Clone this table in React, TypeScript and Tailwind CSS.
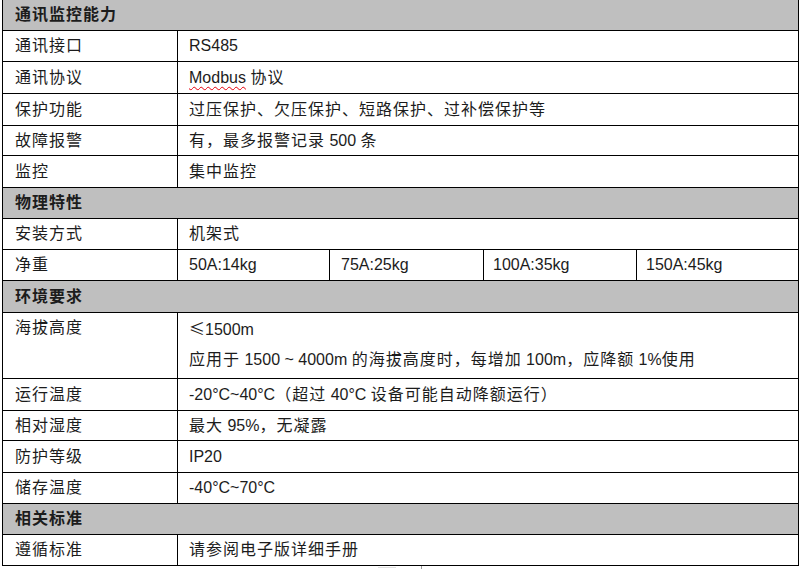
import React from "react";

const CJK_RE = /([\u3000-\u303f\u4e00-\u9fff\uff00-\uffef]+)/;

function T({ s }: { s: string }) {
  const parts = s.split(CJK_RE).filter((p) => p.length > 0);
  return (
    <span className="whitespace-pre">
      {parts.map((p, i) =>
        CJK_RE.test(p) ? (
          <span key={i} className="tracking-[1px]">
            {p}
          </span>
        ) : (
          <span key={i}>{p}</span>
        )
      )}
    </span>
  );
}

type H = "h31" | "h30" | "h32" | "h66";
const hc: Record<H, string> = {
  h30: "h-[30px]",
  h31: "h-[31px]",
  h32: "h-[32px]",
  h66: "h-[66px]",
};

function Header({ label, h }: { label: string; h: H }) {
  return (
    <div className={`${hc[h]} flex items-center border-b border-black bg-[#bfbfbf] pl-[12px] font-bold`}>
      <T s={label} />
    </div>
  );
}

function Row({ label, h, children }: { label: string; h: H; children: React.ReactNode }) {
  return (
    <div className={`${hc[h]} flex border-b border-black`}>
      <div className="flex w-[175px] shrink-0 items-center border-r border-black pl-[12px]">
        <T s={label} />
      </div>
      <div className="flex flex-1 items-center pl-[11px]">
        <span className="whitespace-pre">{children}</span>
      </div>
    </div>
  );
}

export default function App() {
  return (
    <div
      className="min-h-[569px] w-[800px] bg-white text-[16px] text-[#1c1c1c]"
      style={{ fontFamily: '"Liberation Sans", "Noto Sans CJK SC", sans-serif' }}
    >
      <div className="ml-[2px] flex w-[797px] flex-col border-x border-black">
        <Header label="通讯监控能力" h="h31" />
        <Row label="通讯接口" h="h31">
          RS485
        </Row>
        <Row label="通讯协议" h="h32">
          <span className="underline decoration-red-600 decoration-wavy decoration-1 underline-offset-[3px]">
            Modbus
          </span>
          <T s=" 协议" />
        </Row>
        <Row label="保护功能" h="h32">
          <T s="过压保护、欠压保护、短路保护、过补偿保护等" />
        </Row>
        <Row label="故障报警" h="h30">
          <T s="有，最多报警记录 500 条" />
        </Row>
        <Row label="监控" h="h32">
          <T s="集中监控" />
        </Row>
        <Header label="物理特性" h="h31" />
        <Row label="安装方式" h="h31">
          <T s="机架式" />
        </Row>
        <div className="flex h-[31px] border-b border-black">
          <div className="flex w-[175px] shrink-0 items-center border-r border-black pl-[12px]">
            <T s="净重" />
          </div>
          <div className="flex w-[152px] shrink-0 items-center border-r border-black pl-[11px]">50A:14kg</div>
          <div className="flex w-[154px] shrink-0 items-center border-r border-black pl-[11px]">75A:25kg</div>
          <div className="flex w-[153px] shrink-0 items-center border-r border-black pl-[9px]">100A:35kg</div>
          <div className="flex flex-1 items-center pl-[9px]">150A:45kg</div>
        </div>
        <Header label="环境要求" h="h32" />
        <div className="flex h-[66px] border-b border-black">
          <div className="flex w-[175px] shrink-0 items-start border-r border-black pl-[12px] leading-[30px]">
            <T s="海拔高度" />
          </div>
          <div className="flex flex-1 flex-col pl-[11px] leading-[30px]">
            <div>
              <span className="font-['Noto_Sans_CJK_SC']">≤</span>1500m
            </div>
            <div>
              <T s="应用于 1500 ~ 4000m 的海拔高度时，每增加 100m，应降额 1%使用" />
            </div>
          </div>
        </div>
        <Row label="运行温度" h="h32">
          <T s="-20°C~40°C（超过 40°C 设备可能自动降额运行）" />
        </Row>
        <Row label="相对湿度" h="h30">
          <T s="最大 95%，无凝露" />
        </Row>
        <Row label="防护等级" h="h32">
          IP20
        </Row>
        <Row label="储存温度" h="h31">
          -40°C~70°C
        </Row>
        <Header label="相关标准" h="h31" />
        <Row label="遵循标准" h="h31">
          <T s="请参阅电子版详细手册" />
        </Row>
      </div>
      <div className="flex h-[4px]">
        <div className="ml-[378px] mt-[1px] h-[1px] w-[18px] bg-[#e0e0e0]" />
        <div className="ml-[25px] h-[4px] w-[1px] bg-[#9a9a9a]" />
      </div>
    </div>
  );
}
